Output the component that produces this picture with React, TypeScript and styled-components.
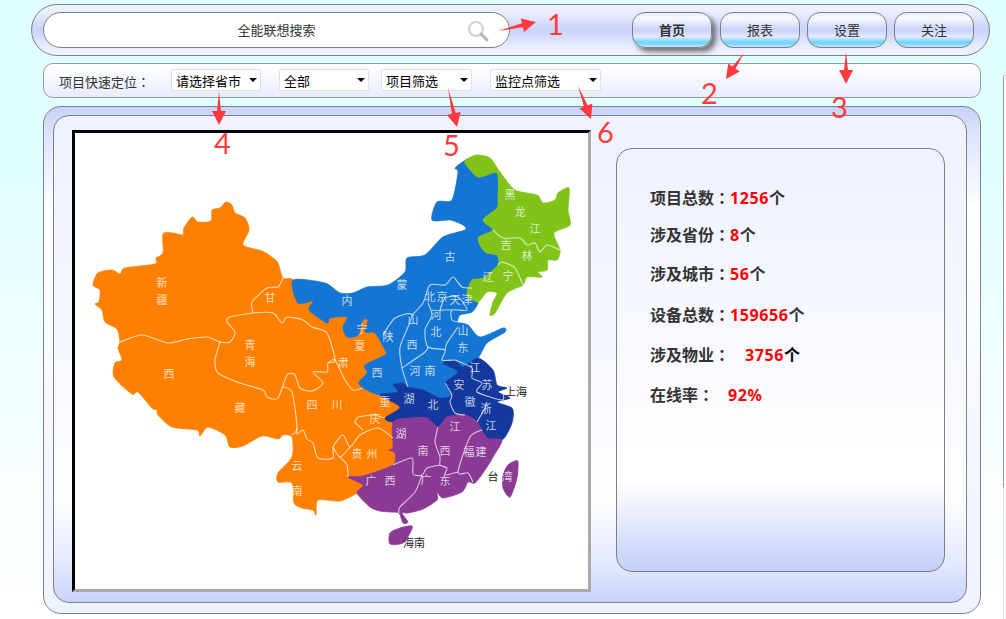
import React from "react";
import styled, { createGlobalStyle } from "styled-components";

const GlobalStyle = createGlobalStyle`
  html, body {
    margin: 0;
    padding: 0;
  }
  body {
    width: 1006px;
    height: 619px;
    overflow: hidden;
    font-family: "Noto Sans CJK SC", "Noto Sans", sans-serif;
    color: #333;
    background: linear-gradient(180deg, #e0ffff 0%, #e0ffff 28%, #f8ffff 75%, #ffffff 100%);
  }
`;

const Page = styled.div`
  position: relative;
  width: 1006px;
  height: 619px;
  box-sizing: border-box;
  padding: 4px 0 0 31px;
`;

const TopBar = styled.div`
  display: flex;
  align-items: center;
  justify-content: space-between;
  box-sizing: border-box;
  width: 959px;
  height: 52px;
  padding: 0 15px 1px 11px;
  border: 1px solid #808080;
  border-radius: 26px;
  background: linear-gradient(180deg, #f0f3ff 0%, #e6eaff 20%, #c8d2fa 50%, #e6eaff 80%, #f0f3ff 100%);
`;

const SearchBox = styled.div`
  position: relative;
  display: flex;
  align-items: center;
  justify-content: center;
  box-sizing: border-box;
  width: 467px;
  height: 36px;
  border: 1px solid #808080;
  border-radius: 18px;
  background: #fff;
  font-size: 13px;
`;

const SearchIcon = styled.svg`
  position: absolute;
  right: 20px;
  top: 7px;
`;

const Nav = styled.div`
  display: flex;
  gap: 7px;

  & > :first-child {
    margin-right: 1px;
  }
`;

const NavButton = styled.button<{ $active?: boolean }>`
  box-sizing: border-box;
  width: 80px;
  height: 36px;
  padding: 0;
  border: 1px solid #808080;
  border-radius: 13px;
  font-family: inherit;
  font-size: 13px;
  font-weight: ${(p) => (p.$active ? 700 : 400)};
  color: #333;
  background: linear-gradient(180deg, #e8ecff 0%, #f8f9ff 16%, #c8d2fa 50%, #e6eaff 70%, #9fe2fd 78%, #6fd0fb 88%, #c0eafd 100%);
  box-shadow: ${(p) => (p.$active ? "4px 4px 5px #777" : "none")};
`;

const FilterBar = styled.div`
  display: flex;
  align-items: center;
  box-sizing: border-box;
  width: 938px;
  height: 35px;
  margin: 7px 0 0 12px;
  padding: 0 0 1px 15px;
  border: 1px solid #999;
  border-radius: 10px;
  background: linear-gradient(180deg, #ffffff 0%, #f2f4ff 60%, #e8ecff 100%);
`;

const FilterLabel = styled.span`
  width: 112px;
  padding-top: 2px;
  font-size: 13px;
`;

const Colon = styled.span`
  font-family: "Noto Sans CJK TC", sans-serif;
`;

const SelectWrap = styled.div<{ $width: number; $gap: number }>`
  position: relative;
  width: ${(p) => p.$width}px;
  height: 22px;
  margin-right: ${(p) => p.$gap}px;

  &::after {
    content: "";
    position: absolute;
    right: 4px;
    top: 9px;
    border-left: 4px solid transparent;
    border-right: 4px solid transparent;
    border-top: 4px solid #000;
    pointer-events: none;
  }
`;

const Select = styled.select`
  display: block;
  appearance: none;
  box-sizing: border-box;
  width: 100%;
  height: 100%;
  padding: 0 0 0 4px;
  border: 1px solid #e0e0e0;
  border-radius: 2px;
  background: #fff;
  font-family: inherit;
  font-size: 13px;
  color: #000;
`;

const MainPanel = styled.div`
  box-sizing: border-box;
  width: 938px;
  height: 508px;
  margin: 8px 0 0 12px;
  padding: 8px 13px 10px 9px;
  border: 1px solid #808080;
  border-radius: 18px;
  background: linear-gradient(180deg, #c8d2fa 0%, #dfe4ff 6%, #ffffff 20%, #f6f8ff 60%, #eef2ff 100%);
`;

const InnerPanel = styled.div`
  display: flex;
  align-items: flex-start;
  box-sizing: border-box;
  height: 488px;
  padding: 14px 0 0 18px;
  border: 1px solid #808080;
  border-radius: 16px;
  background: linear-gradient(180deg, #eef2ff 0%, #f6f8ff 50%, #ffffff 78%, #e4e9ff 92%, #c8d2fa 100%);
`;

const MapFrame = styled.div`
  box-sizing: border-box;
  width: 519px;
  height: 462px;
  border-style: solid;
  border-width: 3px;
  border-color: #000 #aaa #aaa #000;
  background: #fff;
`;

const MapSvg = styled.svg`
  display: block;
`;

const StatsPanel = styled.div`
  box-sizing: border-box;
  width: 329px;
  height: 424px;
  margin: 18px 0 0 25px;
  padding: 38px 0 0 33px;
  border: 1px solid #808080;
  border-radius: 16px;
  background: linear-gradient(180deg, #eef2ff 0%, #f8f9ff 45%, #ffffff 72%, #ffffff 79%, #dfe5fd 90%, #c3cffa 100%);
`;

const StatRow = styled.div<{ $gap: number }>`
  height: 20px;
  margin-top: ${(p) => p.$gap}px;
  font-size: 16px;
  font-weight: 700;
  line-height: 20px;
  white-space: nowrap;
`;

const StatValue = styled.span<{ $offset?: number }>`
  margin-left: ${(p) => p.$offset ?? 0}px;
  font-family: "Noto Sans", sans-serif;
  letter-spacing: 0.6px;
  color: #f00;
`;

const Unit = styled.span<{ $dark?: boolean }>`
  color: ${(p) => (p.$dark ? "#000" : "#333")};
`;

const Annotations = styled.svg`
  position: absolute;
  left: 0;
  top: 0;
  pointer-events: none;
`;

const Badge = styled.span<{ $x: number; $y: number }>`
  position: absolute;
  left: ${(p) => p.$x}px;
  top: ${(p) => p.$y}px;
  font-family: "Lato", sans-serif;
  font-size: 29px;
  line-height: 30px;
  color: #ff3a3f;
`;

const ScrollEdge = styled.div`
  position: absolute;
  left: 1003px;
  top: 75px;
  bottom: 0;
  width: 3px;
  box-sizing: border-box;
  border-top: 1px solid #d0d0d0;
  background: #fff;

  &::before {
    content: "";
    position: absolute;
    left: 0;
    top: 0;
    width: 1px;
    height: 411px;
    background: #999;
  }

  &::after {
    content: "";
    position: absolute;
    left: 0;
    top: 411px;
    bottom: 0;
    width: 1px;
    background: #e4e4e4;
  }
`;

// catmull-rom through the traced points, so the outlines don't look like polygons
const smooth = (d: string): string =>
  d
    .split(/(?=M)/)
    .map((sub) => {
      const closed = sub.includes("Z");
      const nums = (sub.match(/-?\d+(\.\d+)?/g) ?? []).map(Number);
      const pts: [number, number][] = [];
      for (let i = 0; i < nums.length; i += 2) pts.push([nums[i], nums[i + 1]]);
      const n = pts.length;
      const at = (i: number) => (closed ? pts[(i + n) % n] : pts[Math.min(n - 1, Math.max(0, i))]);
      let out = `M${pts[0][0]} ${pts[0][1]}`;
      const last = closed ? n : n - 1;
      for (let i = 0; i < last; i++) {
        const [p0, p1, p2, p3] = [at(i - 1), at(i), at(i + 1), at(i + 2)];
        const c1x = p1[0] + (p2[0] - p0[0]) / 8;
        const c1y = p1[1] + (p2[1] - p0[1]) / 8;
        const c2x = p2[0] - (p3[0] - p1[0]) / 8;
        const c2y = p2[1] - (p3[1] - p1[1]) / 8;
        out += ` C${c1x.toFixed(1)} ${c1y.toFixed(1)} ${c2x.toFixed(1)} ${c2y.toFixed(1)} ${p2[0]} ${p2[1]}`;
      }
      return out + (closed ? " Z" : "");
    })
    .join(" ");

// arrow that tapers from a point at the tail to a solid head at the tip
const arrowPath = (tx: number, ty: number, hx: number, hy: number): string => {
  const len = Math.hypot(hx - tx, hy - ty);
  const ux = (hx - tx) / len;
  const uy = (hy - ty) / len;
  const bx = hx - ux * 14;
  const by = hy - uy * 14;
  const side = (w: number) => `${(bx - uy * w).toFixed(1)} ${(by + ux * w).toFixed(1)}`;
  const otherSide = (w: number) => `${(bx + uy * w).toFixed(1)} ${(by - ux * w).toFixed(1)}`;
  return `M${tx} ${ty} L${side(2)} L${side(7)} L${hx} ${hy} L${otherSide(7)} L${otherSide(2)} Z`;
};

const ORANGE = "M226 202 L232 205 L235 213 L245 218 L249 230 L243 245 L262 251 L273 258 L278 263 L283 278 L293 280 L298 303 L313 301 L309 310 L327 323 L330 318 L347 317 L343 327 L347 337 L358 335 L363 320 L368 320 L365 332 L375 333 L385 350 L385 355 L365 365 L367 373 L359 382 L363 388 L380 395 L400 407 L385 418 L393 422 L393 447 L389 450 L395 453 L393 465 L363 476 L348 477 L363 485 L357 493 L340 501 L318 500 L316 515 L313 510 L302 508 L294 503 L292 483 L278 482 L278 473 L292 457 L292 437 L283 435 L278 439 L262 436 L243 446 L230 447 L225 435 L208 427 L200 436 L197 430 L172 427 L158 415 L157 410 L152 408 L138 392 L132 394 L114 377 L115 363 L122 360 L118 348 L120 342 L117 329 L105 322 L102 310 L95 304 L99 302 L100 290 L93 285 L98 273 L112 270 L120 274 L125 268 L155 264 L156 258 L163 253 L163 234 L173 233 L183 235 L184 228 L192 217 L198 222 L211 221 L212 210 L220 208 Z";

const BLUE = "M293 280 L325 283 L340 293 L353 293 L367 287 L388 285 L405 272 L407 258 L425 255 L443 237 L465 230 L463 225 L450 220 L432 220 L437 202 L452 200 L458 172 L455 168 L467 159 L465 163 L478 177 L497 173 L498 197 L497 208 L483 220 L493 230 L478 238 L485 252 L497 255 L498 265 L483 278 L472 280 L467 295 L478 302 L472 312 L460 315 L458 322 L468 325 L480 337 L503 328 L505 332 L487 343 L478 358 L463 367 L455 360 L443 363 L458 372 L445 383 L452 395 L440 398 L423 390 L408 387 L403 383 L393 385 L398 392 L380 395 L363 388 L359 382 L367 373 L365 365 L385 355 L385 350 L375 333 L365 332 L368 320 L363 320 L358 335 L347 337 L343 327 L347 317 L330 318 L327 323 L309 310 L313 301 L298 303 Z";

const GREEN = "M467 159 L477 155 L490 158 L500 172 L515 190 L537 195 L543 203 L555 200 L558 193 L569 188 L568 210 L570 225 L554 233 L560 250 L557 260 L548 260 L547 270 L538 272 L542 277 L527 277 L523 285 L507 293 L495 313 L490 315 L493 302 L497 293 L487 292 L478 302 L467 295 L472 280 L483 278 L498 265 L497 255 L485 252 L478 238 L493 230 L483 220 L497 208 L498 197 L497 173 L478 177 L465 163 Z";

const NAVY = "M478 358 L493 370 L497 385 L507 388 L498 392 L510 398 L497 402 L512 408 L513 418 L510 428 L502 440 L487 438 L477 422 L465 415 L455 417 L447 417 L438 427 L427 418 L410 418 L393 422 L385 418 L400 407 L380 395 L398 392 L393 385 L403 383 L408 387 L423 390 L440 398 L452 395 L445 383 L458 372 L443 363 L455 360 L463 367 Z";

const PURPLE = "M393 422 L410 418 L427 418 L438 427 L447 417 L465 415 L477 422 L487 438 L502 440 L493 457 L485 470 L475 483 L468 482 L462 492 L443 498 L437 492 L437 500 L423 509 L408 513 L402 513 L408 522 L403 523 L399 513 L390 512 L380 511 L370 507 L357 493 L363 485 L348 477 L363 476 L393 465 L395 453 L389 450 L393 447 Z M390 533 L400 528 L412 526 L410 533 L403 543 L390 544 Z M515 461 L518 462 L517 478 L510 497 L503 488 L503 475 L508 465 Z";

const BORDERS = [
  "M120 342 L142 335 L168 343 L187 339 L207 337 L220 342 L230 342 L235 332 L227 322 L230 317 L253 313 L273 313 L282 323 L287 317 L303 320 L312 327 L327 333 L335 360 L328 363 L327 372 L313 372 L323 383 L312 391 L300 388 L295 375 L287 375 L278 398 L267 397 L263 390 L240 383 L218 373 L215 360 L220 342",
  "M253 313 L252 302 L267 288 L278 287 L283 278",
  "M283 387 L292 392 L297 428 L292 435",
  "M297 428 L297 434 L303 430 L307 439 L313 443 L318 458 L333 458 L333 447 L343 435 L350 447 L360 435 L378 428 L393 438",
  "M358 417 L355 422 L363 430 M358 417 L373 415 L385 418",
  "M340 457 L347 465 L348 477 M333 447 L340 457 L350 447",
  "M328 363 L335 360 L345 380 L353 390 L363 388",
  "M383 335 L395 318 L412 315 L400 347 L402 368 L408 387",
  "M412 315 L423 303 L430 285 L445 285 L453 277 L462 287 L472 288",
  "M428 303 L432 315 L425 330 L428 347 L445 350 L442 360 L455 360",
  "M402 368 L425 352 L428 347 M445 350 L447 343 L458 327",
  "M440 310 L445 298 L458 297 L467 310 L452 310 L452 320 L460 322 M440 310 L452 310",
  "M455 360 L472 368 L472 378 L482 383 L477 392 L502 400 L503 393",
  "M487 402 L485 408 L477 422",
  "M445 383 L452 395 L450 402 L455 413 L465 415",
  "M438 427 L435 442 L440 457 L440 465 L447 468 L445 475 L458 472",
  "M482 430 L470 437 L458 472 L468 473 L473 482",
  "M440 465 L427 468 L422 475 L413 474 L412 458 L393 465",
  "M422 475 L415 492 L400 507 L399 513",
  "M493 230 L503 238 L520 238 L527 245 L535 243 L540 252 L547 245 L560 250",
  "M498 265 L502 262 L515 268 L523 285",
];

const REGIONS = [
  { d: ORANGE, color: "#ff7f00" },
  { d: BLUE, color: "#1475d3" },
  { d: GREEN, color: "#82c31a" },
  { d: NAVY, color: "#15389e" },
  { d: PURPLE, color: "#8a3a94" },
];

const PROVINCE_LABELS: [string, number, number][] = [
  ["新", 162, 283], ["疆", 162, 300], ["甘", 270, 298], ["青", 250, 345], ["海", 250, 362],
  ["西", 169, 374], ["藏", 240, 408], ["四", 312, 405], ["川", 337, 405], ["云", 297, 466],
  ["南", 297, 491], ["内", 347, 301], ["蒙", 402, 285], ["古", 450, 257], ["黑", 510, 195],
  ["龙", 520, 212], ["江", 535, 229], ["吉", 506, 245], ["林", 527, 256], ["辽", 488, 277],
  ["宁", 508, 276], ["北", 430, 297], ["京", 442, 297], ["天", 455, 300], ["津", 467, 300],
  ["河", 436, 315], ["北", 436, 332], ["山", 413, 320], ["西", 412, 345], ["山", 463, 331],
  ["东", 463, 348], ["陕", 388, 337], ["西", 377, 373], ["宁", 362, 329], ["夏", 360, 346],
  ["肃", 343, 363], ["河", 415, 371], ["南", 430, 371], ["江", 475, 368], ["苏", 487, 385],
  ["安", 459, 385], ["徽", 470, 402], ["湖", 409, 399], ["北", 433, 405], ["浙", 486, 409],
  ["江", 491, 426], ["重", 385, 402], ["庆", 375, 419], ["贵", 357, 454], ["州", 372, 454],
  ["湖", 401, 434], ["南", 423, 451], ["江", 455, 427], ["西", 445, 451], ["福", 469, 452],
  ["建", 481, 452], ["广", 371, 481], ["西", 390, 481], ["广", 426, 480], ["东", 445, 481],
  ["湾", 507, 477],
];

const OUTSIDE_LABELS: [string, number, number][] = [
  ["上海", 516, 392],
  ["台", 493, 477],
  ["海南", 414, 543],
];

const ChinaMap: React.FC = () => (
  <MapSvg width={513} height={456} viewBox="75 133 513 456">
    {REGIONS.map((r) => (
      <path key={r.color} d={smooth(r.d)} fill={r.color} stroke={r.color} strokeWidth={0.8} strokeLinejoin="round" />
    ))}
    {BORDERS.map((d) => (
      <path key={d} d={smooth(d)} fill="none" stroke="#fff" strokeOpacity={0.7} strokeWidth={1.1} strokeLinejoin="round" />
    ))}
    {PROVINCE_LABELS.map(([t, x, y]) => (
      <text key={`${t}${x}${y}`} x={x} y={y + 4} fontSize={11} textAnchor="middle" fill="#fff" fillOpacity={0.75}>
        {t}
      </text>
    ))}
    {OUTSIDE_LABELS.map(([t, x, y]) => (
      <text key={t} x={x} y={y + 4} fontSize={11} textAnchor="middle" fill="#222">
        {t}
      </text>
    ))}
  </MapSvg>
);

const stats = [
  { label: "项目总数", value: "1256", unit: "个", gap: 0 },
  { label: "涉及省份", value: "8", unit: "个", gap: 17 },
  { label: "涉及城市", value: "56", unit: "个", gap: 19 },
  { label: "设备总数", value: "159656", unit: "个", gap: 21 },
  { label: "涉及物业", value: "3756", unit: "个", gap: 20, offset: 15, dark: true },
  { label: "在线率", value: "92%", unit: "", gap: 20, offset: 14 },
];

const selects = [
  { text: "请选择省市", width: 90, gap: 18 },
  { text: "全部", width: 90, gap: 12 },
  { text: "项目筛选", width: 91, gap: 18 },
  { text: "监控点筛选", width: 111, gap: 0 },
];

const arrows: [number, number, number, number][] = [
  [498, 31, 536, 22],
  [744, 53, 726, 79],
  [846, 52, 846, 84],
  [219, 91, 219, 125],
  [448, 88, 457, 127],
  [578, 86, 591, 119],
];

const badges = [
  { text: "1", x: 547, y: 9 },
  { text: "2", x: 701, y: 78 },
  { text: "3", x: 831, y: 92 },
  { text: "4", x: 214, y: 128 },
  { text: "5", x: 443, y: 130 },
  { text: "6", x: 597, y: 117 },
];

const App: React.FC = () => (
  <Page>
    <GlobalStyle />
    <TopBar>
      <SearchBox>
        全能联想搜索
        <SearchIcon width={22} height={22} viewBox="0 0 22 22" fill="none">
          <circle cx="9" cy="9" r="7" stroke="#cfcfcf" strokeWidth="2" />
          <path d="M14 14 L20 20" stroke="#b4b4b4" strokeWidth="3" strokeLinecap="round" />
        </SearchIcon>
      </SearchBox>
      <Nav>
        <NavButton $active>首页</NavButton>
        <NavButton>报表</NavButton>
        <NavButton>设置</NavButton>
        <NavButton>关注</NavButton>
      </Nav>
    </TopBar>
    <FilterBar>
      <FilterLabel>
        项目快速定位<Colon>：</Colon>
      </FilterLabel>
      {selects.map((s) => (
        <SelectWrap key={s.text} $width={s.width} $gap={s.gap}>
          <Select defaultValue={s.text}>
            <option>{s.text}</option>
          </Select>
        </SelectWrap>
      ))}
    </FilterBar>
    <MainPanel>
      <InnerPanel>
        <MapFrame>
          <ChinaMap />
        </MapFrame>
        <StatsPanel>
          {stats.map((s) => (
            <StatRow key={s.label} $gap={s.gap}>
              {s.label}
              <Colon>：</Colon>
              <StatValue $offset={s.offset}>{s.value}</StatValue>
              {s.unit && <Unit $dark={s.dark}>{s.unit}</Unit>}
            </StatRow>
          ))}
        </StatsPanel>
      </InnerPanel>
    </MainPanel>
    <Annotations width={1006} height={619} viewBox="0 0 1006 619">
      {arrows.map(([tx, ty, hx, hy]) => (
        <path key={`${tx}${ty}`} d={arrowPath(tx, ty, hx, hy)} fill="#ff3a3f" />
      ))}
    </Annotations>
    {badges.map((b) => (
      <Badge key={b.text} $x={b.x} $y={b.y}>
        {b.text}
      </Badge>
    ))}
    <ScrollEdge />
  </Page>
);

export default App;
